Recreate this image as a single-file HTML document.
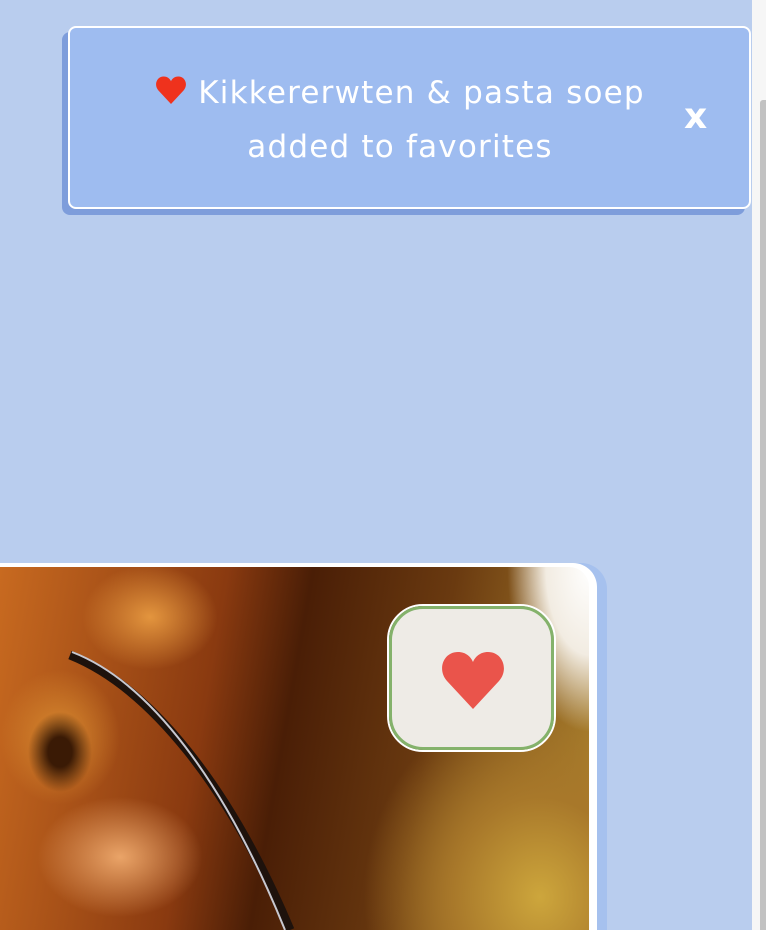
<!DOCTYPE html>
<html><head><style>
html,body{margin:0;padding:0;width:766px;height:930px;overflow:hidden;background:#b9cdee;font-family:"DejaVu Sans","Liberation Sans",sans-serif;position:relative;}
.strip{position:absolute;left:752px;top:0;width:14px;height:930px;background:#f6f6f6;}
.sb{position:absolute;left:760px;top:100px;width:6px;height:830px;background:#c2c2c2;border-radius:3px 0 0 0;}
.toastsh{position:absolute;left:62px;top:32px;width:683px;height:183px;background:#7e9ddb;border-radius:8px;}
.toast{position:absolute;left:68px;top:26px;width:679px;height:179px;background:#9ebcf0;border:2px solid #fff;border-radius:8px;}
.msg{position:absolute;left:0;top:38px;width:660px;text-align:center;color:#fff;font-size:31px;line-height:54px;letter-spacing:1.2px;}
.x{position:absolute;left:614px;top:68px;color:#fff;font-weight:bold;font-size:36px;}
.cardsh{position:absolute;left:-30px;top:563px;width:637px;height:367px;background:#a6c1ee;border-radius:0 26px 0 0;}
.card{position:absolute;left:-30px;top:563px;width:627px;height:367px;background:#fff;border-radius:0 24px 0 0;}
.img{position:absolute;left:0;top:567px;width:589px;height:363px;border-radius:0 20px 0 0;overflow:hidden;background-repeat:no-repeat;
background-image:
radial-gradient(ellipse 40px 50px at 60px 185px,#3a1a05 30%,transparent 80%),
radial-gradient(ellipse 90px 70px at 150px 50px,#e3953e 0%,transparent 75%),
radial-gradient(ellipse 80px 90px at 60px 170px,#d88a30 0%,transparent 75%),
radial-gradient(ellipse 110px 80px at 120px 290px,#eaa468 0%,transparent 75%),
radial-gradient(ellipse 110px 220px at 590px 0px,#ffffff 0%,#f2ece2 40%,transparent 75%),
radial-gradient(ellipse 220px 250px at 540px 330px,#cda63c 0%,#a8782a 40%,transparent 80%),
linear-gradient(100deg,#c86a20 0%,#8a3a10 35%,#4a1e06 48%,#6a3a10 70%,#b08830 100%);}
.fav{position:absolute;left:387px;top:604px;width:165px;height:144px;border:2px solid #fff;border-radius:36px;}
.fav2{position:absolute;left:0;top:0;right:0;bottom:0;border:3px solid #84b26b;border-radius:34px;background:#eeebe6;}
</style></head><body>
<div class="strip"></div><div class="sb"></div>
<div class="cardsh"></div><div class="card"></div>
<div class="img"><svg width="589" height="363" style="position:absolute;left:0;top:0"><path d="M70 88 C150 120 230 220 290 363" stroke="#1e120c" stroke-width="9" fill="none"/><path d="M72 85 C150 115 225 215 285 363" stroke="#c8c8d0" stroke-width="2" fill="none"/></svg></div>
<div class="fav"><div class="fav2">
<svg style="position:absolute;left:49px;top:42px" width="64" height="58" viewBox="0 0 64 58"><path d="M32 58 L6 30 C-4 19 2 1 17 1 C25 1 30 6 32 11 C34 6 39 1 47 1 C62 1 68 19 58 30 Z" fill="#ea544b"/></svg>
</div></div>
<div class="toastsh"></div>
<div class="toast">
<div class="msg"><svg width="32" height="28" viewBox="0 0 64 58" style="vertical-align:-1px"><path d="M32 58 L6 30 C-4 19 2 1 17 1 C25 1 30 6 32 11 C34 6 39 1 47 1 C62 1 68 19 58 30 Z" fill="#ef321d"/></svg> Kikkererwten &amp; pasta soep<br>added to favorites</div>
<div class="x">x</div>
</div>
</body></html>
